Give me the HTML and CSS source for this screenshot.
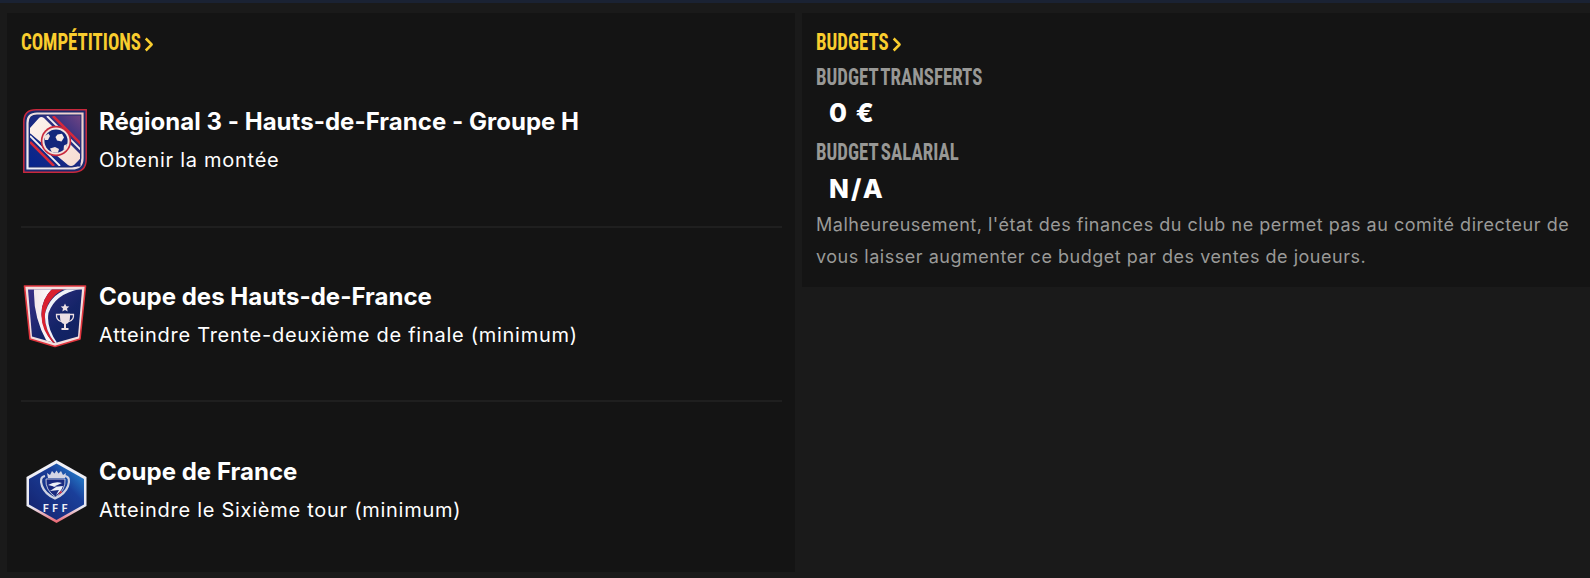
FILE: index.html
```html
<!DOCTYPE html>
<html lang="fr">
<head>
<meta charset="utf-8">
<title>Objectifs</title>
<link rel="stylesheet" href="styles.css">
</head>
<body>
<div class="topbar"></div>
<main class="board">
  <section class="panel comps">
    <h2 class="head"><span class="cond">COMPÉTITIONS<svg class="chev" viewBox="0 0 9 15" preserveAspectRatio="none"><path d="M1.500 1.500 7.500 7.500l-6 6"/></svg></span></h2>
    <ul class="list">
      <li class="row">
        <svg class="crest" viewBox="0 0 64 64">
          <defs>
            <linearGradient id="g1" x1="0" y1="1" x2="1" y2="0"><stop offset="0" stop-color="#06258e"/><stop offset=".55" stop-color="#1d2a80"/><stop offset="1" stop-color="#6f4483"/></linearGradient>
            <linearGradient id="g1b" x1="0" y1="0" x2="1" y2="1"><stop offset="0" stop-color="#fdf4ee"/><stop offset="1" stop-color="#f6dcd2"/></linearGradient>
            <linearGradient id="g1c" x1="0" y1="1" x2="1" y2="0"><stop offset="0" stop-color="#eef0f8"/><stop offset="1" stop-color="#eecdc8"/></linearGradient>
            <clipPath id="c1"><path d="M13 7H57V57H7V13Q7 7 13 7Z"/></clipPath>
          </defs>
          <path d="M13 .800H63.200V50Q63.200 63.200 50 63.200H.800V13Q.800 .800 13 .800Z" fill="#1c2a6e" stroke="#c8283c" stroke-width="1.500"/>
          <path d="M14 4.500H59.500V49Q59.500 59.500 49 59.500H4.500V14Q4.500 4.500 14 4.500Z" fill="none" stroke="url(#g1c)" stroke-width="2.200"/>
          <path d="M13 6.500H57.500V57.500H6.500V13Q6.500 6.500 13 6.500Z" fill="url(#g1)"/>
          <g clip-path="url(#c1)">
            <path d="M6 20 16 9Q18 7 21 9L57 45Q59 48 56 51L51 56Q48 58 45 56L8 25Q5 23 6 20Z" fill="url(#g1b)"/>
            <path d="M24 7 58 41M7 27 37 57" stroke="#f4f0f2" stroke-width="1.800"/>
            <path d="M30 7 58 35M7 33 31 57" stroke="#d5283a" stroke-width="2.600"/>
          </g>
          <circle cx="33" cy="32" r="15.200" fill="#c8283c"/>
          <circle cx="33" cy="32" r="13.600" fill="#f3e3de"/>
          <circle cx="33" cy="32" r="11.600" fill="#13277c"/>
          <path d="M34.500 25.500 39 24.800 41 28.500 38.500 32.500 34 31.500 32.500 28Z" fill="#f7ebe6"/>
          <path d="M22 27 25.500 24.500 27 27 25 31 22 31Z" fill="#f3e3de"/>
          <path d="M27 39.500 32 38 36 40 35 43.500 29 43.500Z" fill="#f3e3de"/>
          <path d="M41 36.500 44 35 43 39 40.500 41Z" fill="#f3e3de"/>
        </svg>
        <div class="txt">
          <h3 class="name">Régional 3 - Hauts-de-France - Groupe H</h3>
          <p class="goal">Obtenir la montée</p>
        </div>
      </li>
      <li class="row">
        <svg class="crest" viewBox="0 0 64 64">
          <defs>
            <linearGradient id="g2" x1="0" y1="0" x2="1" y2="1"><stop offset="0" stop-color="#3a2f86"/><stop offset=".6" stop-color="#142468"/><stop offset="1" stop-color="#10205e"/></linearGradient>
            <linearGradient id="g2b" x1="0" y1="0" x2="1" y2="0"><stop offset="0" stop-color="#f3e6ea"/><stop offset="1" stop-color="#fff"/></linearGradient>
            <clipPath id="c2"><path d="M5 5.500H59L55 52.500 32 59 9 52.500Z"/></clipPath>
          </defs>
          <path d="M1.500 2H62.500L57 55 32 62.500 7 55Z" fill="#f3dede" stroke="#e2363f" stroke-width="1.600" stroke-linejoin="round"/>
          <path d="M5 5.500H59L55 52.500 32 59 9 52.500Z" fill="url(#g2)"/>
          <g clip-path="url(#c2)">
            <path d="M11 5H29Q18 16 18.500 31 20 47 31 60L24 58Q10 33 11 5Z" fill="url(#g2b)"/>
            <path d="M29 5H41Q25 13 22 30 21 46 33 60L31 60Q18 46 18.500 31 18 16 29 5Z" fill="#d9202f"/>
            <path d="M44 5H57Q32 10 25.500 29 23 44 35 60L33 60Q21 46 22 30 26 12 44 5Z" fill="#f0f1f8"/>
          </g>
          <path d="M42 19.500 43.300 22.300 46.300 22.600 44 24.600 44.700 27.500 42 26 39.300 27.500 40 24.600 37.700 22.600 40.700 22.300Z" fill="#ecdfe4"/>
          <path d="M37 29.500H47V33Q47 39 43 40V44H45.500V46H38.500V44H41V40Q37 39 37 33Z" fill="#ecdfe4"/>
          <path d="M37 30.500H33.500Q33 36 38 37.500M47 30.500H50.500Q51 36 46 37.500" fill="none" stroke="#ecdfe4" stroke-width="1.300"/>
        </svg>
        <div class="txt">
          <h3 class="name">Coupe des Hauts-de-France</h3>
          <p class="goal">Atteindre Trente-deuxième de finale (minimum)</p>
        </div>
      </li>
      <li class="row">
        <svg class="crest" viewBox="0 0 64 64">
          <defs>
            <linearGradient id="g3" x1="1" y1="0" x2="0" y2="1"><stop offset="0" stop-color="#2a9ae0"/><stop offset=".35" stop-color="#1a3f9a"/><stop offset="1" stop-color="#14206a"/></linearGradient>
            <linearGradient id="g3b" x1="0" y1="0" x2="0" y2="1"><stop offset="0" stop-color="#f2f2f8"/><stop offset=".75" stop-color="#e8e8f2"/><stop offset="1" stop-color="#e8606c"/></linearGradient>
          </defs>
          <path d="M33.500 1 63.500 18V47L33.500 64 3.500 47V18Z" fill="url(#g3b)"/>
          <path d="M33.500 4.500 61 20V45.500L33.500 61 6 45.500V20Z" fill="url(#g3)"/>
          <path d="M25 19 24 14 27 16 29 12 31.500 14.500 33.500 11.500 35.500 14.500 38 12 40 16 43 14 42 19Z" fill="#d5d6e4"/>
          <path d="M22 17Q16 18 19 27 22 35 32 39.500 42 35 45 27 48 18 42 17" fill="none" stroke="#cfd2e2" stroke-width="2.200"/>
          <path d="M23 20H42Q43 31 32.500 38 22 31 23 20Z" fill="#1a2a80" stroke="#e6e6f0" stroke-width=".8"/>
          <path d="M25 26Q32 22 39 24L30 28 40 27Q38 33 33 36L36 31 27 32 33 28Z" fill="#eef0f8"/>
          <path d="M35 36 38 31.500 39 33.500Z" fill="#e03040"/>
          <text class="fff" x="34" y="52.500" text-anchor="middle">FFF</text>
        </svg>
        <div class="txt">
          <h3 class="name">Coupe de France</h3>
          <p class="goal">Atteindre le Sixième tour (minimum)</p>
        </div>
      </li>
    </ul>
  </section>
  <section class="panel budgets">
    <h2 class="head head-b"><span class="cond">BUDGETS<svg class="chev" viewBox="0 0 9 15" preserveAspectRatio="none"><path d="M1.500 1.500 7.500 7.500l-6 6"/></svg></span></h2>
    <h4 class="label"><span class="cond">BUDGET TRANSFERTS</span></h4>
    <p class="amount">0 €</p>
    <h4 class="label"><span class="cond">BUDGET SALARIAL</span></h4>
    <p class="amount amount-last">N/A</p>
    <p class="note">Malheureusement, l'état des finances du club ne permet pas au comité directeur de vous laisser augmenter ce budget par des ventes de joueurs.</p>
  </section>
</main>
</body>
</html>
```
FILE: styles.css
```css
* { box-sizing: border-box; }
html, body { margin: 0; height: 100%; }
body {
  width: 1590px;
  height: 578px;
  overflow: hidden;
  background: #1a1a1a;
  font-family: "Inter", "Noto Sans", sans-serif;
  color: #fff;
}
.topbar { height: 3px; background: #1a2233; }
.board {
  display: grid;
  grid-template-columns: 788px 788px;
  column-gap: 7px;
  padding: 10px 0 0 7px;
  align-items: start;
}
.panel { background: #141414; }
.comps { height: 559px; padding: 18px 13px 0 14px; }
.budgets { height: 274px; padding: 18px 14px 0 14px; }
.head {
  margin: 0;
  height: 22px;
  font-family: "Roboto", sans-serif;
  font-size: 24px;
  line-height: 22px;
  font-weight: 700;
  color: #f9cd2e;
}
.head-b { height: 24px; margin-bottom: 8px; }
.cond {
  display: inline-block;
  font-stretch: 75%;
  white-space: nowrap;
  word-spacing: -2px;
  transform: scaleX(.785);
  transform-origin: left center;
}
.chev {
  display: inline-block;
  width: 11.500px;
  height: 15px;
  margin-left: 4px;
  vertical-align: -2px;
  fill: none;
  stroke: #f9cd2e;
  stroke-width: 2.500;
}
.list { list-style: none; margin: 0; padding: 0; }
.row {
  height: 174.500px;
  display: flex;
  align-items: center;
  gap: 12px;
  padding: 4px 0 0 2px;
  border-bottom: 2px solid #1f1f1f;
}
.row:last-child { border-bottom: 0; }
.crest { width: 64px; height: 64px; flex: none; }
.fff { font-family: "Inter", sans-serif; font-size: 10px; font-weight: 700; letter-spacing: 3.500px; fill: #eef0f8; }
.txt { display: flex; flex-direction: column; gap: 10px; }
.name { margin: 0; font-size: 24px; line-height: 29px; font-weight: 700; letter-spacing: .03px; }
.goal { margin: 0; font-size: 20px; line-height: 29px; font-weight: 400; letter-spacing: .73px; }
.label {
  margin: 0;
  font-family: "Roboto", sans-serif;
  font-size: 24px;
  line-height: 28px;
  font-weight: 700;
  color: #989896;
}
.amount { margin: 7px 0 10px 13px; font-size: 26px; line-height: 30px; font-weight: 800; letter-spacing: 1.500px; }
.amount-last { margin: 8px 0 5px 13px; letter-spacing: 2px; }
.note { margin: 0; font-size: 18px; line-height: 32px; color: #9a9a98; letter-spacing: .52px; }
```
